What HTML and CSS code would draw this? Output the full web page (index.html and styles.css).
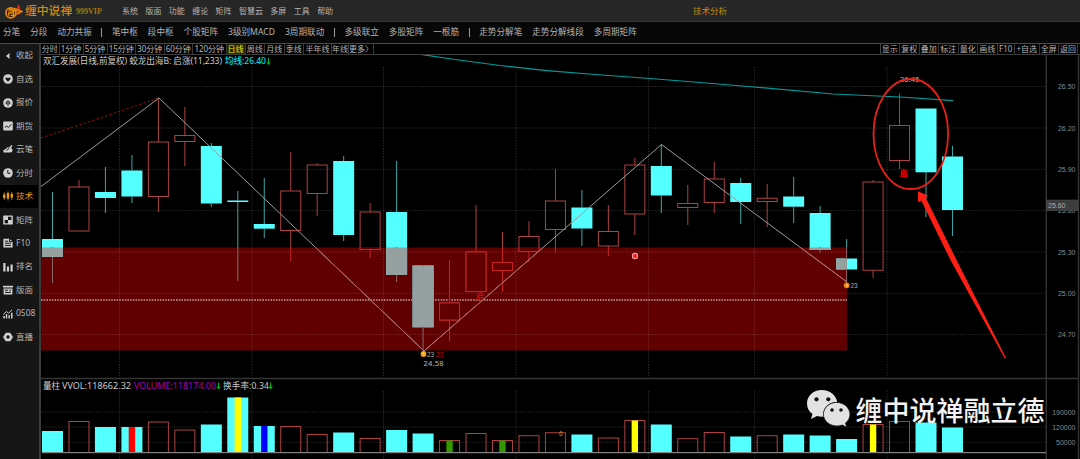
FILE: index.html
```
<!DOCTYPE html>
<html lang="zh-CN">
<head>
  <meta charset="utf-8">
  <title>缠中说禅 技术分析</title>
  <link rel="stylesheet" href="styles.css">
</head>
<body>
  <header class="titlebar">
    <svg class="logo" viewBox="0 0 20 20">
      <path d="M13 11 C12 9 15 7 14 2.5 C18 5 17.5 8 16.5 9.5 L20 10 L15.5 14 Z" fill="#d8281c"/>
      <circle cx="7.2" cy="12" r="5.2" fill="#3a1c00" stroke="#e8860c" stroke-width="1.8"/>
      <path d="M4.5 10 H10 V12 H5 V15 M10 12 V14.5 H7 M5 8 L14 10" fill="none" stroke="#ee940e" stroke-width="1.3"/>
      <path d="M11 7 L15 9 L19 10.5 L13.5 13 L10 16" fill="none" stroke="#e8860c" stroke-width="1.5"/>
    </svg>
    <span class="brand">缠中说禅</span>
    <span class="vip">999VIP</span>
    <nav class="menu">
      <span>系统</span><span>版面</span><span>功能</span><span>缠论</span><span>矩阵</span><span>智慧云</span><span>多屏</span><span>工具</span><span>帮助</span>
    </nav>
    <span class="page-name">技术分析</span>
  </header>

  <nav class="toolbar">
    <span>分笔</span><span>分段</span><span>动力共振</span><i></i>
    <span>笔中枢</span><span>段中枢</span><span>个股矩阵</span><span>3级别MACD</span><span>3周期联动</span><i></i>
    <span>多级联立</span><span>多股矩阵</span><span>一根筋</span><i></i>
    <span>走势分解笔</span><span>走势分解线段</span><span>多周期矩阵</span>
  </nav>

  <div class="main">
    <aside class="sidebar">
      <a><svg viewBox="0 0 10 10"><path d="M6.5 2 V8 L3 5 Z"/></svg>收起</a>
      <a><svg viewBox="0 0 10 10"><circle cx="5" cy="5" r="4.8"/><path class="cut" d="M5 7.8 L2.4 5 Q2.4 2.8 5 4 Q7.6 2.8 7.6 5 Z"/></svg>自选</a>
      <a><svg viewBox="0 0 10 10"><circle cx="5" cy="5" r="4.8"/><path class="cut" d="M5 2 L7.5 5 L5 8 L2.5 5 Z"/><path d="M4.5 3.5 H5.5 V7 H4.5 Z"/></svg>报价</a>
      <a><svg viewBox="0 0 10 10"><rect x=".2" y=".4" width="9.6" height="9.2" rx="1"/><path class="cutline" d="M1.8 6.5 L3.8 5 L5.4 6.5 L8.3 3.3"/></svg>期货</a>
      <a><svg viewBox="0 0 10 10"><path d="M.5 8.5 Q-.5 5.5 3 5 Q4 2.5 6 3.5 L8.5 1 L9.5 2 L8 4 Q10 5 9.4 7 Q8.8 8.5 7 8.5 Z"/><path class="cutline" d="M3.5 6.5 L6.5 4"/></svg>云笔</a>
      <a><svg viewBox="0 0 10 10"><circle cx="5" cy="5" r="4.8"/><path class="cutline" d="M4.8 2 V5.3 H7.5"/></svg>分时</a>
      <a class="active"><svg viewBox="0 0 10 10"><path d="M0 3.5 H2.4 V7 H0 Z M3.8 2 H6.2 V7.5 H3.8 Z M7.6 3 H10 V6.5 H7.6 Z M.8 1.5 H1.6 V9 H.8 Z M4.6 .5 H5.4 V9.5 H4.6 Z M8.4 1 H9.2 V9 H8.4 Z"/></svg>技术</a>
      <a><svg viewBox="0 0 10 10"><rect x=".2" y=".4" width="9.6" height="9.2" rx=".6"/><path class="cut" d="M5 1.8 H8.4 V5 H5 Z M1.7 5 H5 V8.3 H1.7 Z"/></svg>矩阵</a>
      <a><svg viewBox="0 0 10 10"><path d="M.4 .8 H6.5 L9.6 3.5 V9.6 H.4 Z"/><path class="cutline" d="M2 3.2 H5.2 M2 5.2 H8 M2 7.4 H8 M6.5 .8 V3.6 H9.6"/></svg>F10</a>
      <a><svg viewBox="0 0 10 10"><path d="M.3 1 H2.5 V9.5 H.3 Z M3.9 4.5 H6 V9.5 H3.9 Z M7.5 2.5 H9.7 V9.5 H7.5 Z"/></svg>排名</a>
      <a><svg viewBox="0 0 10 10"><path d="M0 .8 H10 V2.6 H0 Z M.6 3.5 H9.4 V9.4 H.6 Z"/><path class="cutline" d="M2 5.2 H5 M6.2 5.2 H8 M2 7.4 H8"/></svg>版面</a>
      <a><svg viewBox="0 0 10 10"><path d="M.3 7 H1.8 V9.6 H.3 Z M2.8 5 H4.2 V9.6 H2.8 Z M5.4 6 H6.8 V9.6 H5.4 Z M8 3.8 H9.5 V9.6 H8 Z"/><path class="line" d="M.3 5.5 L3.4 2.5 L5.6 4.2 L9 .8"/></svg>0508</a>
      <a><svg viewBox="0 0 10 10"><path d="M2.8 .8 H7.2 L10 5 L7.2 9.2 H2.8 L0 5 Z"/><circle class="cut" cx="5" cy="5" r="1.7"/></svg>直播</a>
    </aside>

    <section class="content">
      <div class="tabs">
        <div class="periods">
          <span>分时</span><span>1分钟</span><span>5分钟</span><span>15分钟</span><span>30分钟</span><span>60分钟</span><span>120分钟</span><span class="on">日线</span><span>周线</span><span>月线</span><span>季线</span><span>半年线</span><span>年线</span><span>更多〉</span>
        </div>
        <div class="tools">
          <span>显示</span><span>复权</span><span>叠加</span><span>标注</span><span>量化</span><span>画线</span><span>F10</span><span>+自选</span><span>全屏</span><span>返回</span>
        </div>
      </div>

      <svg class="chart" viewBox="41 55 1039 404">
        <defs>
          <clipPath id="zone"><rect x="41" y="247.5" width="806" height="103"/></clipPath>
        </defs>
        <rect class="zone" x="41" y="247.5" width="806" height="103"/>
        <g id="grid" class="grid"></g>
        <path class="frame" d="M41 378.5 H1078 M1046.3 55 V459 M1078.5 55 V459"/>
        <path class="middle" d="M41 300 H847"/>

        <g id="candles"></g>
        <g id="candlesInZone" class="in-zone" clip-path="url(#zone)"></g>
        <g id="volume"></g>
        <path class="base" d="M42 452.6 H1046"/>

        <path class="guess" d="M41 138 L159 98"/>
        <path class="stroke" d="M41 186.5 L159 98 L424 351 L661.5 144.5 L847 282"/>
        <path class="stroke-zone" clip-path="url(#zone)" d="M159 98 L424 351 L661.5 144.5 L847 282"/>
        <path class="ma" d="M420 54.3 L455 59.5 L500 65.5 L547 70.7 L595 74.5 L650 78.5 L700 82.5 L754 87 L833 94 L900 97 L953 100.7"/>

        <!-- signals -->
        <circle cx="635" cy="256" r="2.6" fill="#f01818" stroke="#ff9a9a" stroke-width="1.2"/>
        <text class="sign" x="476" y="298.5">启</text>
        <text class="sign" x="899.5" y="176">启</text>
        <circle cx="423.5" cy="354" r="2.9" fill="#f0a020"/><circle cx="423.5" cy="353.5" r="1" fill="#fff060"/>
        <text class="small" x="427" y="357">23</text>
        <text class="small red" x="436" y="357">23</text>
        <circle cx="846.7" cy="285.3" r="2.9" fill="#f08018"/><circle cx="847" cy="285.5" r="1" fill="#fff060"/>
        <text class="small" x="850.5" y="288">23</text>
        <text class="price" x="423.5" y="365.5" textLength="20">24.58</text>
        <text class="price" x="900" y="82" textLength="19.5">26.45</text>
        <text class="small olive" x="559" y="436">6</text>

        <g id="axis" class="axis"></g>
        <rect x="1046.5" y="200" width="31.5" height="10.5" fill="#3d3d3d" stroke="#555" stroke-width=".5"/>
        <text class="current" x="1048" y="208">25.60</text>

        <text class="title" x="43" y="64.3" textLength="179">双汇发展(日线,前复权) 蛟龙出海B: 启涨(11,233)</text>
        <text class="title cyan" x="225" y="64.3" textLength="41">均线:26.40</text>
        <path class="down" d="M268.5 58 V64 M267 62 L268.5 64.5 L270 62"/>
        <text class="title" x="43" y="388.8" textLength="17">量柱</text>
        <text class="title wide" x="62" y="388.8" textLength="69">VVOL:118662.32</text>
        <text class="title wide purple" x="134" y="388.8" textLength="82">VOLUME:118174.00</text>
        <path class="down" d="M218.5 382.5 V388.5 M217 386.5 L218.5 389 L220 386.5"/>
        <text class="title" x="223" y="388.8" textLength="46">换手率:0.34</text>
        <path class="down" d="M270.5 382.5 V388.5 M269 386.5 L270.5 389 L272 386.5"/>

        <!-- hand drawn notes -->
        <ellipse class="ring" cx="910.8" cy="134" rx="37.3" ry="55"/>
        <path fill="#ff1e14" d="M918 191.3 L918 202.3 L921.3 200.5 L951 261 L1004.8 358.6 L1006 358 L956.5 260 L925.8 198 L928 195.8 Z"/>

        <g class="wechat">
          <path d="M822 390 C813 390 807 396 807 403.5 C807 408 809 411.5 812.5 414 L811 419 L817 416 Q820 417 823.5 416.8 L824 416 C822 408 829 402 837.3 402 C836 395 830 390 822 390 Z"/>
          <path stroke="#111" stroke-width=".8" d="M836.7 402.4 C829 402.4 823.4 408 823.4 414.4 C823.4 421 830 426 837 426 Q840 426 842 425 L846.8 427.3 L845.5 423 C848 421 850 418 850 414.4 C850 408 844 402.4 836.7 402.4 Z"/>
          <g fill="#111"><circle cx="816.5" cy="399.3" r="2.1"/><circle cx="828.3" cy="399.3" r="2.1"/><circle cx="832" cy="410" r="1.8"/><circle cx="841" cy="410" r="1.8"/></g>
        </g>
        <text class="watermark" x="855.5" y="421.3" textLength="189">缠中说禅融立德</text>
      </svg>
    </section>
  </div>

  <script src="chart.js"></script>
</body>
</html>
```
FILE: styles.css
```
* {
  box-sizing: border-box;
}
body {
  margin: 0;
  width: 1080px;
  height: 459px;
  overflow: hidden;
  display: flex;
  flex-direction: column;
  background: #000;
  color: #b4b4b4;
  font-family: "Noto Sans", "Noto Sans CJK SC", sans-serif;
  font-size: 8.5px;
  line-height: 1;
  white-space: nowrap;
}

/* top bars */
.titlebar {
  flex: none;
  display: flex;
  align-items: center;
  height: 22px;
  padding-left: 4px;
  background: #262626;
  border-bottom: 1px solid #343434;
}
.logo {
  width: 19px;
  height: 20px;
  margin-right: 2px;
}
.brand {
  width: 51px;
  color: #d48c10;
  font-size: 11.8px;
  font-weight: 500;
}
.vip {
  width: 46px;
  padding-top: 3px;
  color: #a8720e;
  font: bold 8px/1 "Liberation Serif", serif;
}
.menu {
  display: flex;
  gap: 7.4px;
  width: 571px;
  font-size: 8px;
}
.page-name {
  padding-top: 2px;
  color: #c88a10;
}
.toolbar {
  flex: none;
  display: flex;
  align-items: center;
  gap: 10px;
  height: 21px;
  padding-left: 3px;
  background: #070707;
  font-size: 8.6px;
}
.toolbar i {
  width: 1px;
  height: 9px;
  margin: 0 -.4px;
  background: #999;
}
.main {
  flex: 1;
  display: flex;
  min-height: 0;
  border-top: 1px solid #484848;
}

/* left menu */
.sidebar {
  flex: none;
  width: 41px;
  padding-right: 1px;
  background: #161616;
  border-right: 2px solid #3a3a3a;
}
.sidebar a {
  display: flex;
  align-items: center;
  gap: 3.5px;
  height: 23.45px;
  padding-left: 2.5px;
}
.sidebar svg {
  width: 10px;
  height: 10px;
  fill: #d0d0d0;
}
.sidebar .cut {
  fill: #161616;
}
.sidebar .cutline {
  fill: none;
  stroke: #161616;
}
.sidebar .line {
  fill: none;
  stroke: #d0d0d0;
}
.sidebar .active {
  background: #000;
  color: #e89c10;
}
.sidebar .active svg {
  fill: #e89c10;
}

/* period tabs */
.content {
  flex: 1;
  min-width: 0;
}
.tabs {
  display: flex;
  justify-content: space-between;
  height: 11px;
  padding-right: 2px;
  border-bottom: 1px solid #3c3c3c;
  font-size: 8px;
}
.periods, .tools {
  display: grid;
}
.periods {
  grid-template-columns: 18.5px 24px 24px 28.5px 28.5px 28.5px 33.5px 19px 19.5px 19.5px 19.5px 28px 17px 25px;
}
.tools {
  grid-template-columns: 19.5px 19.5px 19.5px 19.5px 19.5px 19.5px 17.5px 24.5px 19.5px 19px;
  border-left: 1px solid #444;
}
.tabs span {
  height: 10px;
  border-right: 1px solid #383838;
  text-align: center;
  line-height: 9.5px;
}
.tabs .on {
  background: #242400;
  color: #f0f000;
}

/* chart */
.chart {
  display: block;
  width: 1039px;
  height: 404px;
}
.zone {
  fill: #600000;
}
.grid {
  stroke: #fff;
  stroke-opacity: .17;
  stroke-dasharray: 1.3 1.4;
}
.frame {
  fill: none;
  stroke: #343434;
  stroke-width: 1.4;
}
.middle {
  stroke: #c89c9c;
  stroke-width: 1.3;
  stroke-dasharray: 1.6 1.1;
}
.up {
  fill: none;
  stroke: #ac4242;
}
.fall {
  fill: #54ffff;
}
.fall-wick {
  stroke: #3aa8a8;
}
.in-zone .up {
  stroke: #c82424;
}
.in-zone .up.body {
  fill: #600000;
}
.in-zone .fall {
  fill: #96a0a0;
}
.in-zone .fall-wick {
  stroke: #8a6666;
}
.in-zone .clear {
  stroke: #600000;
  stroke-width: 2;
}
.base {
  stroke: #808080;
  stroke-width: 1.2;
}
.guess {
  stroke: #a00808;
  stroke-dasharray: 2.5 2;
}
.stroke, .stroke-zone {
  fill: none;
  stroke: #9c9c9c;
}
.stroke-zone {
  stroke: #b06060;
}
.ma {
  fill: none;
  stroke: #009c9c;
  stroke-width: 1.2;
}
.ring {
  fill: none;
  stroke: #e82014;
  stroke-width: 1.8;
}
.down {
  fill: none;
  stroke: #00b428;
}
.title {
  fill: #ccc;
  font-size: 8.6px;
}
.wide {
  font-size: 9px;
}
.cyan {
  fill: #00dce0;
  font-weight: 500;
}
.purple {
  fill: #a800b4;
}
.axis, .current {
  fill: #8a8a8a;
  font: 7px "Liberation Sans", sans-serif;
}
.axis {
  text-anchor: end;
}
.current {
  fill: #aaa;
}
.price {
  fill: #bbb;
  font-size: 7.5px;
}
.small {
  fill: #aaa;
  font: 6.5px "Liberation Sans", sans-serif;
}
.red {
  fill: #c00000;
}
.olive {
  fill: #b4a000;
}
.sign {
  fill: #e80000;
  font-size: 8px;
  font-weight: bold;
}
.wechat {
  fill: #e2e2e2;
}
.watermark {
  fill: #f2f2f2;
  font-family: "Noto Sans CJK SC", sans-serif;
  font-size: 27px;
  font-weight: 500;
}
```
FILE: chart.js
```
// [body top, body bottom, high, low, rising, volume top, marker colour]
var bars = [
  [239, 257, 192, 283, 0, 431],
  [187, 231, 180, 231, 1, 421.5],
  [192, 198, 167, 213, 0, 427],
  [170.5, 196.5, 155, 203, 0, 427, '#ff0000'],
  [142, 196.5, 98, 212, 1, 422],
  [135.5, 141.5, 107, 166, 1, 430],
  [146, 203.5, 143, 207, 0, 424.5],
  [200.5, 202, 191, 281, 0, 397.5, '#ffff00'],
  [224, 228.7, 178, 238, 0, 426, '#0000ff'],
  [191, 230.5, 152, 261, 1, 426.5],
  [165, 193.5, 163, 216, 1, 434.5],
  [161, 235, 156, 241, 0, 432.5],
  [212, 249.5, 203, 258, 1, 438.5],
  [212, 275, 161, 282, 0, 430],
  [265.5, 327.3, 265.5, 350, 0, 433.5],
  [303, 320, 260, 341, 1, 440.5, '#339900'],
  [252, 291.5, 205, 291.5, 1, 433.5],
  [262.5, 270.5, 232, 292, 1, 440.5, '#339900'],
  [236.5, 251.5, 221, 262, 1, 435.7],
  [201, 229.5, 169, 253, 1, 432.7],
  [207.5, 228.5, 190, 246, 0, 434.5],
  [231.5, 246, 205, 256, 1, 438],
  [165, 214, 158, 235, 1, 420.5, '#ffff00'],
  [166, 195.5, 144, 213, 0, 424.5],
  [203.5, 207.5, 185, 225, 1, 438.7],
  [179, 202.5, 162, 213, 1, 432.5],
  [183, 202, 178, 224, 0, 436.5],
  [198.3, 201.5, 184, 227, 1, 435.7],
  [196.5, 206.7, 177, 223, 0, 434.5],
  [213, 250, 206, 253, 0, 435.5],
  [258.5, 269.5, 239, 284, 0, 439],
  [182, 270.3, 180, 278, 1, 424.5, '#ffff00'],
  [125.5, 160.5, 93.5, 169, 1, 421.5],
  [108.5, 172.3, 108.5, 217, 0, 422.5],
  [156.5, 210, 146, 236, 0, 427.5]
];
var first = 52.5, step = 26.47, base = 452.5;

function line(x1, y1, x2, y2, cls) {
  return '<line class="' + cls + '" x1="' + x1 + '" y1="' + y1 + '" x2="' + x2 + '" y2="' + y2 + '"/>';
}
function rect(x, y, w, h, cls, fill) {
  return '<rect class="' + cls + '" x="' + x + '" y="' + y + '" width="' + w + '" height="' + h + '"' + (fill ? ' fill="' + fill + '"' : '') + '/>';
}

var candles = '', cover = '', volume = '';
bars.forEach(function (b, i) {
  var x = first + step * i;
  var wick = b[4] ? 'up' : 'fall-wick';
  var w = line(x, b[2], x, b[0], wick) + line(x, b[1], x, b[3], wick);
  var body = b[4] ? rect(x - 10, b[0], 20, b[1] - b[0], 'up body') : rect(x - 10.5, b[0], 21, b[1] - b[0], 'fall');
  candles += w + body;
  cover += line(x, b[2], x, b[3], 'clear') + w + body;

  volume += b[4] ? rect(x - 10, b[5], 20, base - b[5], 'up') : rect(x - 10.5, b[5], 21, base - b[5], 'fall');
  if (b[6]) {
    volume += rect(x - 3.2, b[5], 6.4, base - b[5], 'mark', b[6]);
  }
});
document.getElementById('candles').innerHTML = candles;
document.getElementById('candlesInZone').innerHTML = cover;
document.getElementById('volume').innerHTML = volume;

// grid and scale
var grid = '', axis = '';
[119.5, 252, 383.5, 516, 648.5, 754.5, 887].forEach(function (x) {
  grid += line(x, 67, x, 378, '') + line(x, 391, x, 459, '');
});
[86.5, 128, 169.3, 210.6, 252, 293.3, 334.6].forEach(function (y, i) {
  grid += line(42, y, 1046, y, '');
  axis += '<text x="1075.5" y="' + (y + 2.6) + '">' + (26.5 - 0.3 * i).toFixed(2) + '</text>';
});
[[412, '190000'], [427, '120000'], [442.3, '50000']].forEach(function (v) {
  grid += line(42, v[0], 1046, v[0], '');
  axis += '<text x="1075.5" y="' + (v[0] + 2.6) + '">' + v[1] + '</text>';
});
document.getElementById('grid').innerHTML = grid;
document.getElementById('axis').innerHTML = axis;
```
